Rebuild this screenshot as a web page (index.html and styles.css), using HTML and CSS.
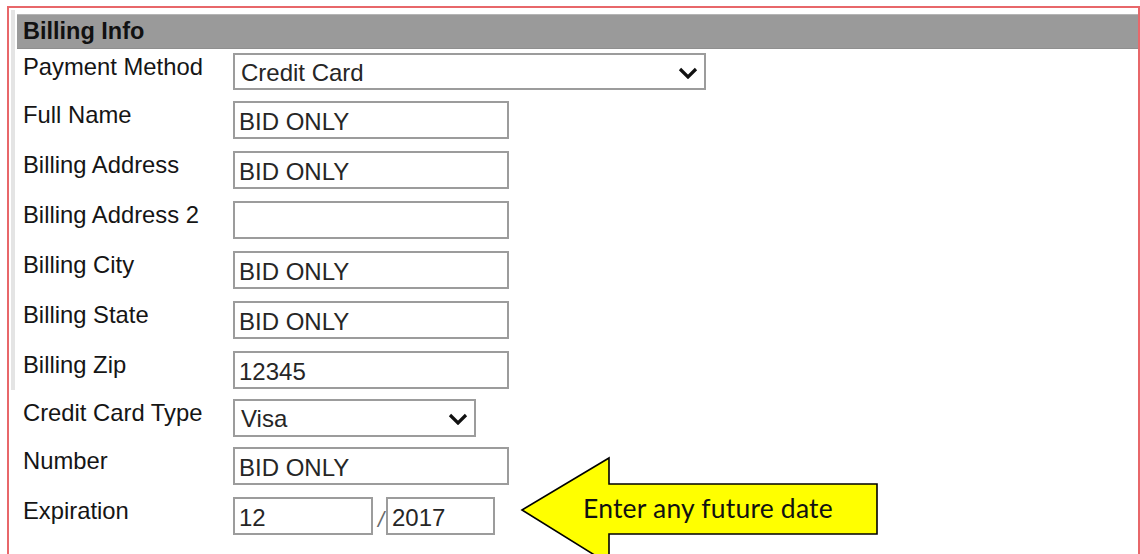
FILE: index.html
```html
<!DOCTYPE html>
<html>
<head>
<meta charset="utf-8">
<title>Billing Info</title>
<link rel="stylesheet" href="styles.css">
</head>
<body>
<div class="frame">
  <div class="strip"></div>
  <div class="panel">
    <div class="panel-head">Billing Info</div>
    <div class="form">
      <div class="row row--short">
        <label class="label">Payment Method</label>
        <div class="select select--wide">
          <span class="select-value">Credit Card</span>
          <svg class="chevron" width="20" height="12" viewBox="0 0 20 12"><polyline points="2,2 10,10 18,2" fill="none" stroke="#111" stroke-width="3.2"/></svg>
        </div>
      </div>
      <div class="row">
        <label class="label">Full Name</label>
        <input class="field" type="text" value="BID ONLY">
      </div>
      <div class="row">
        <label class="label">Billing Address</label>
        <input class="field" type="text" value="BID ONLY">
      </div>
      <div class="row">
        <label class="label">Billing Address 2</label>
        <input class="field" type="text" value="">
      </div>
      <div class="row">
        <label class="label">Billing City</label>
        <input class="field" type="text" value="BID ONLY">
      </div>
      <div class="row">
        <label class="label">Billing State</label>
        <input class="field" type="text" value="BID ONLY">
      </div>
      <div class="row row--short">
        <label class="label">Billing Zip</label>
        <input class="field" type="text" value="12345">
      </div>
      <div class="row row--short">
        <label class="label">Credit Card Type</label>
        <div class="select select--card">
          <span class="select-value">Visa</span>
          <svg class="chevron" width="20" height="12" viewBox="0 0 20 12"><polyline points="2,2 10,10 18,2" fill="none" stroke="#111" stroke-width="3.2"/></svg>
        </div>
      </div>
      <div class="row">
        <label class="label">Number</label>
        <input class="field" type="text" value="BID ONLY">
      </div>
      <div class="row">
        <label class="label">Expiration</label>
        <div class="expiry">
          <input class="field field--month" type="text" value="12">
          <span class="slash">/</span>
          <input class="field field--year" type="text" value="2017">
        </div>
      </div>
    </div>
  </div>
</div>

<div class="callout">
  <svg class="callout-arrow" width="362" height="112" viewBox="0 0 362 112">
    <polygon points="2,54 89,2 89,28 357,28 357,78 89,78 89,108" fill="#ffff00" stroke="#000" stroke-width="1.6" stroke-linejoin="miter"/>
  </svg>
  <span class="callout-text">Enter any future date</span>
</div>
</body>
</html>
```

FILE: styles.css
```css
html, body {
  margin: 0;
  padding: 0;
  background: #ffffff;
  overflow: hidden;
}

body {
  width: 1140px;
  height: 554px;
  position: relative;
  font-family: "Liberation Sans", Arial, sans-serif;
  color: #222;
}

/* outlined section box */
.frame {
  box-sizing: border-box;
  margin: 6px 0 0 7px;
  width: 1133px;
  height: 548px;
  border: 2px solid #e8676a;
  border-bottom: none;
  padding-top: 2px;
  display: flex;
}

.strip {
  margin-left: 2px;
  width: 4px;
  height: 380px;
  background: #e4e4e4;
  flex: none;
}

.panel {
  margin-left: 2px;
  padding-top: 4px;
  flex: 1;
}

.panel-head {
  box-sizing: border-box;
  height: 35px;
  background: #9a9a9a;
  border-top: 1px solid #b5b5b5;
  border-bottom: 1px solid #8f8f8f;
  padding-left: 6px;
  font-size: 23.5px;
  font-weight: bold;
  line-height: 33px;
  color: #111;
}

.form {
  display: flex;
  flex-direction: column;
}

.row {
  height: 50px;
  display: flex;
  align-items: flex-start;
  padding-top: 4px;
  box-sizing: border-box;
}

.row--short {
  height: 48px;
}

.label {
  width: 210px;
  padding-left: 6px;
  flex: none;
  font-size: 23.8px;
  line-height: 23px;
  padding-top: 2px;
  color: #151515;
}

.field,
.select {
  box-sizing: border-box;
  height: 38px;
  border: 2px solid #9c9c9c;
  background: #fff;
  font-family: "Liberation Sans", Arial, sans-serif;
  font-size: 24px;
  color: #262626;
  padding: 4px 0 0 4px;
  margin: 0;
  outline: none;
}

.field {
  width: 276px;
}

.select {
  position: relative;
  display: flex;
  align-items: center;
  padding-top: 2px;
  padding-left: 6px;
}

.select--wide {
  width: 473px;
  height: 37px;
}

.select--card {
  width: 243px;
}

.chevron {
  position: absolute;
  right: 6px;
  top: 12px;
}

.expiry {
  display: flex;
  align-items: flex-start;
}

.field--month {
  width: 140px;
}

.field--year {
  width: 109px;
}

.slash {
  width: 13px;
  text-align: right;
  padding-right: 2px;
  box-sizing: border-box;
  font-size: 22px;
  font-style: italic;
  color: #6a6a6a;
  padding-top: 13px;
  line-height: 20px;
}

/* yellow hint arrow pointing at the expiry fields */
.callout {
  position: absolute;
  left: 520px;
  top: 456px;
  width: 362px;
  height: 112px;
}

.callout-arrow {
  display: block;
}

.callout-text {
  position: absolute;
  left: 63px;
  top: 38px;
  font-family: Lato, "Open Sans", sans-serif;
  font-size: 26.5px;
  letter-spacing: 0.2px;
  line-height: 28px;
  color: #111;
  white-space: nowrap;
}
```
